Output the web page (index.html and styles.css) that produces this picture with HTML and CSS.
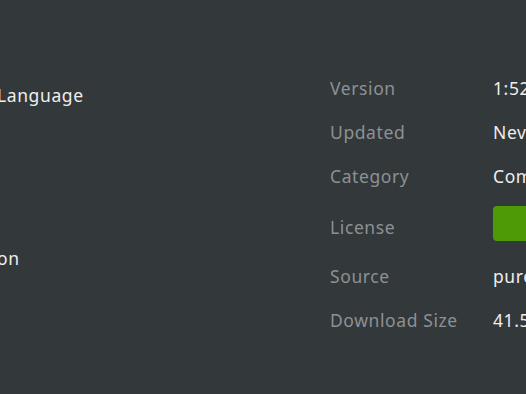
FILE: index.html
```html
<!DOCTYPE html>
<html lang="en">
<head>
    <meta charset="UTF-8">
    <meta name="viewport" content="width=device-width, initial-scale=1.0">
    <title>Details</title>
    <link rel="stylesheet" href="styles.css">
</head>
<body>
    <div class="page">
        <div class="summary">
            <p class="summary-line">Language</p>
            <p class="summary-line summary-low">on</p>
        </div>

        <!-- 详细信息 -->
        <div class="details">
            <div class="label">Version</div>
            <div class="value">1:52.1.0</div>

            <div class="label">Updated</div>
            <div class="value">Never</div>

            <div class="label">Category</div>
            <div class="value">Communication</div>

            <div class="label license-row">License</div>
            <div class="value license-row"><span class="license-btn">Free Software</span></div>

            <div class="label">Source</div>
            <div class="value">pureos</div>

            <div class="label">Download Size</div>
            <div class="value">41.5 MB</div>
        </div>
    </div>
</body>
</html>
```

FILE: styles.css
```css
* {
    margin: 0;
    padding: 0;
    box-sizing: border-box;
}

body {
    font-family: "Noto Sans", "Open Sans", sans-serif;
    background: #33383b;
    color: #eeeeec;
    width: 526px;
    height: 394px;
    overflow: hidden;
}

.page {
    display: flex;
    padding-top: 76px;
}

.summary {
    width: 333px;
    margin-left: -3px;
    flex-shrink: 0;
    font-size: 17.5px;
    letter-spacing: 0.6px;
}

.summary-line {
    height: 38px;
    line-height: 38px;
}

.summary-low {
    margin-top: 125px;
}

.details {
    display: grid;
    grid-template-columns: 131px 120px;
    column-gap: 32px;
    font-size: 17.5px;
    letter-spacing: 0.6px;
    line-height: 24px;
}

.label,
.value {
    display: flex;
    align-items: center;
    min-height: 24px;
    margin-bottom: 20px;
    white-space: nowrap;
}

.label {
    color: #8d9194;
}

.value {
    overflow: hidden;
}

.license-row {
    min-height: 40px;
    margin-top: -2px;
    margin-bottom: 18px;
}

.label.license-row {
    padding-top: 2px;
}

.value.license-row {
    align-items: flex-start;
}

.license-btn {
    display: inline-block;
    background: #4e9a06;
    color: #ffffff;
    border-radius: 4px;
    padding: 0 14px 0 40px;
    height: 35px;
    line-height: 35px;
}
```
